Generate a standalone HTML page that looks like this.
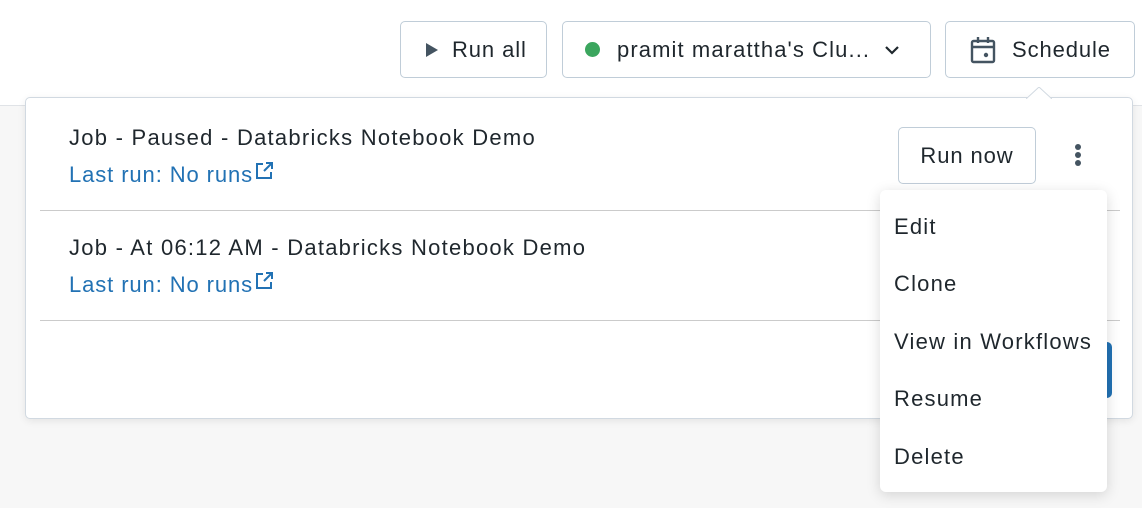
<!DOCTYPE html>
<html><head><style>
*{box-sizing:border-box;margin:0;padding:0}
body{width:1142px;height:508px;overflow:hidden;background:#f7f7f7;font-family:"Liberation Sans",sans-serif;color:#1f272d;position:relative;letter-spacing:.9px}
.top{position:absolute;left:0;top:0;width:1142px;height:106px;background:#fff;border-bottom:1px solid #e0e3e7}
.btn{position:absolute;top:21px;height:57px;border:1px solid #c0cdd8;border-radius:5px;background:#fff;font-size:22px;display:flex;align-items:center}
.pop{position:absolute;left:25px;top:97px;width:1108px;height:322px;background:#fff;border:1px solid #d1d9e1;border-radius:5px;box-shadow:0 2px 8px rgba(0,0,0,.08)}
.t{position:absolute;left:43px;font-size:22px;color:#1f272d;letter-spacing:1.25px}
.l{position:absolute;left:43px;font-size:22px;color:#2272b4}
.hr{position:absolute;left:14px;width:1080px;height:1px;background:#cbcbcb}
.menu{position:absolute;left:880px;top:190px;width:227px;height:302px;background:#fff;border-radius:6px;box-shadow:0 3px 14px rgba(0,0,0,.15)}
.menu div{position:absolute;left:14px;font-size:22px;color:#1f272d;letter-spacing:1.2px}
</style></head><body>
<div class="top"></div>
<div class="btn" style="left:400px;width:147px"><svg style="margin-left:24px" width="14" height="16" viewBox="0 0 14 16"><path d="M1 1L13 8L1 15Z" fill="#445461"/></svg><span style="margin-left:13px">Run all</span></div>
<div class="btn" style="left:562px;width:369px"><span style="margin-left:22px;width:15px;height:15px;border-radius:50%;background:#3ba65e;display:inline-block"></span><span style="margin-left:17px;letter-spacing:1.1px">pramit marattha's Clu...</span><svg style="margin-left:14px" width="16" height="10" viewBox="0 0 16 10"><path d="M2 2L8 8L14 2" stroke="#1f272d" stroke-width="2.2" fill="none"/></svg></div>
<div class="btn" style="left:945px;width:190px"><svg style="margin-left:24px" width="26" height="28" viewBox="0 0 26 28"><rect x="2" y="5" width="22" height="21" rx="1.5" fill="none" stroke="#445461" stroke-width="2.4"/><path d="M2 11H24M8 1V7M18 1V7" stroke="#445461" stroke-width="2.4"/><circle cx="16" cy="19" r="2.2" fill="#445461"/></svg><span style="margin-left:16px">Schedule</span></div>
<div class="pop">
<svg style="position:absolute;left:1000px;top:-11px" width="26" height="12"><path d="M0 12L13 0L26 12" fill="#fff" stroke="#d1d9e1"/></svg>
<div class="t" style="top:27px">Job - Paused - Databricks Notebook Demo</div>
<div class="l" style="top:63px">Last run: No runs<svg style="margin-left:2px;vertical-align:2px" width="19" height="19" viewBox="0 0 19 19"><path d="M8 3H2V17H16V11M11 2H17V8M17 2L9 10" stroke="#2272b4" stroke-width="2" fill="none"/></svg></div>
<div style="position:absolute;left:872px;top:29px;width:138px;height:57px;border:1px solid #c0cdd8;border-radius:5px;font-size:22px;display:flex;align-items:center;justify-content:center">Run now</div>
<div style="position:absolute;left:1049px;top:46px;width:6px">
<div style="width:6px;height:6px;border-radius:50%;background:#445461;margin-bottom:2px"></div><div style="width:6px;height:6px;border-radius:50%;background:#445461;margin-bottom:2px"></div><div style="width:6px;height:6px;border-radius:50%;background:#445461"></div></div>
<div class="hr" style="top:112px"></div>
<div class="t" style="top:137px">Job - At 06:12 AM - Databricks Notebook Demo</div>
<div class="l" style="top:173px">Last run: No runs<svg style="margin-left:2px;vertical-align:2px" width="19" height="19" viewBox="0 0 19 19"><path d="M8 3H2V17H16V11M11 2H17V8M17 2L9 10" stroke="#2272b4" stroke-width="2" fill="none"/></svg></div>
<div class="hr" style="top:222px"></div>
<div style="position:absolute;left:1060px;top:244px;width:26px;height:56px;background:#2272b4;border-radius:5px"></div>
</div>
<div class="menu">
<div style="top:24px">Edit</div>
<div style="top:81px">Clone</div>
<div style="top:139px">View in Workflows</div>
<div style="top:196px">Resume</div>
<div style="top:254px">Delete</div>
</div>
</body></html>
